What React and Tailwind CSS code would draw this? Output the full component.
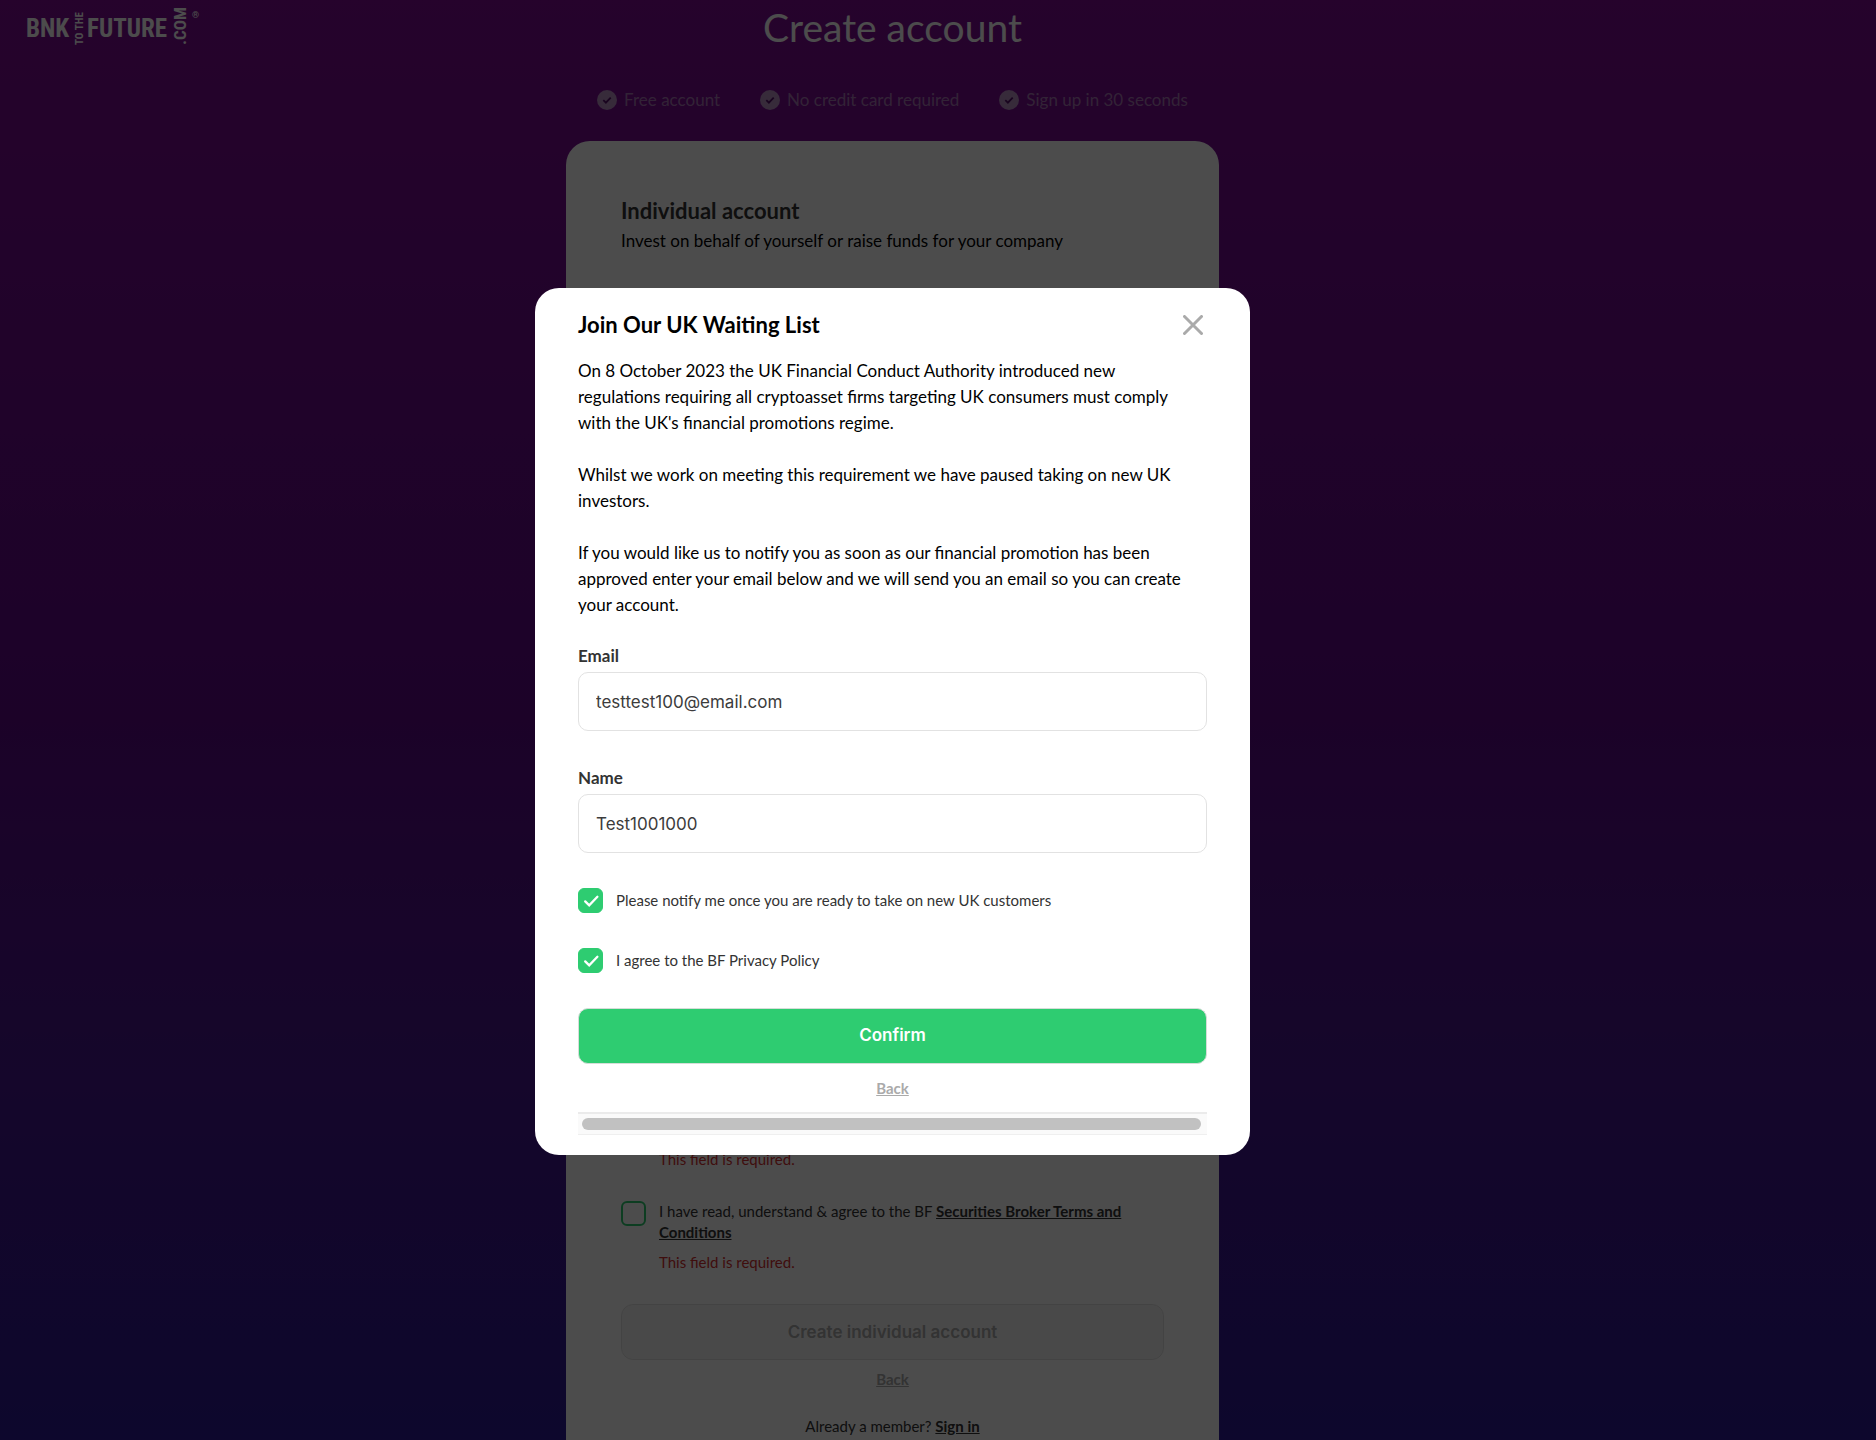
import { useState } from 'react';

const FEATURES = ['Free account', 'No credit card required', 'Sign up in 30 seconds'];

function Logo() {
  return (
    <svg width="190" height="44" viewBox="0 0 190 44" fill="white" role="img" aria-label="BnkToTheFuture.com"
      className="font-['Liberation_Sans_Narrow','Roboto_Condensed','Roboto',sans-serif] font-bold">
      <text x="0" y="31" fontSize="25">BNK</text>
      <text transform="translate(57 39) rotate(-90)" fontSize="11">TO THE</text>
      <text x="61" y="31" fontSize="25">FUTURE</text>
      <text transform="translate(160 39) rotate(-90)" fontSize="17">.COM</text>
      <text x="166" y="12" fontSize="9">®</text>
    </svg>
  );
}

function Feature({ label }) {
  return (
    <li className="flex items-center gap-[7px]">
      <svg width="20" height="20" viewBox="0 0 20 20" fill="none">
        <circle cx="10" cy="10" r="10" fill="#b88fc4" />
        <path d="M6.3 10.2l2.6 2.5 4.8-5" stroke="#560f68" strokeWidth="1.8" />
      </svg>
      <span>{label}</span>
    </li>
  );
}

function Field({ id, label, type, value, onChange }) {
  return (
    <div className="flex flex-col gap-1">
      <label htmlFor={id} className="text-[17px] leading-6 font-bold text-[#333]">{label}</label>
      <input id={id} type={type} value={value} onChange={(e) => onChange(e.target.value)}
        className="h-[59px] w-full rounded-[10px] border border-[#e2e2e2] bg-white px-[17px] pt-px font-['Inter',sans-serif] text-[17px] text-[#3c3c3c] outline-none" />
    </div>
  );
}

function Checkbox({ id, label }) {
  const [checked, setChecked] = useState(true);

  return (
    <div className="flex items-center gap-[13px]">
      <span className="grid shrink-0">
        <input id={id} type="checkbox" checked={checked} onChange={() => setChecked(!checked)}
          className="peer col-start-1 row-start-1 size-[25px] appearance-none rounded-md border border-[#2ecc71] checked:bg-[#2ecc71]" />
        <svg width="25" height="25" viewBox="0 0 25 25" fill="none"
          className="pointer-events-none invisible col-start-1 row-start-1 peer-checked:visible">
          <path d="M7.2 13.4l4 4 8.2-8.6" stroke="white" strokeWidth="2.3" strokeLinecap="round" />
        </svg>
      </span>
      <label htmlFor={id} className="text-[15px] leading-6 text-[#333]">{label}</label>
    </div>
  );
}

function WaitingListModal() {
  const [email, setEmail] = useState('testtest100@email.com');
  const [name, setName] = useState('Test1001000');

  return (
    <div className="fixed inset-0 flex items-center justify-center bg-black/70 pt-0.5 pr-[91px]">
      <div role="dialog" aria-labelledby="modal-title" className="w-full max-w-[715px] rounded-3xl bg-white px-[43px] pt-[22px] pb-5">
        <div className="flex h-[30px] items-center justify-between">
          <h2 id="modal-title" className="text-[22px] font-bold text-black">Join Our UK Waiting List</h2>
          <button aria-label="Close" className="mr-1">
            <svg width="20" height="20" viewBox="0 0 20 20" fill="none" stroke="#aaa" strokeWidth="3" strokeLinecap="round">
              <path d="M1.5 1.5l17 17M18.5 1.5l-17 17" />
            </svg>
          </button>
        </div>
        <div className="mt-[18px] flex flex-col gap-[26px] pr-5 text-[17px] leading-[26px] text-black">
          <p>
            On 8 October 2023 the UK Financial Conduct Authority introduced new regulations requiring all
            cryptoasset firms targeting UK consumers must comply with the UK's financial promotions regime.
          </p>
          <p>Whilst we work on meeting this requirement we have paused taking on new UK investors.</p>
          <p>
            If you would like us to notify you as soon as our financial promotion has been approved enter your
            email below and we will send you an email so you can create your account.
          </p>
        </div>
        <form className="mt-[26px] flex flex-col gap-[35px]" onSubmit={(e) => e.preventDefault()}>
          <Field id="email" label="Email" type="email" value={email} onChange={setEmail} />
          <Field id="name" label="Name" type="text" value={name} onChange={setName} />
          <Checkbox id="notify" label="Please notify me once you are ready to take on new UK customers" />
          <Checkbox id="privacy" label="I agree to the BF Privacy Policy" />
          <button type="submit" className="h-[56px] rounded-[10px] border border-[#d5ddd8] bg-[#2ecc71] pt-px font-['Inter',sans-serif] text-[17px] font-semibold text-white">
            Confirm
          </button>
        </form>
        <div className="mt-3 text-center text-[15px] leading-6 font-bold text-[#aaa]">
          <a href="#" className="underline">Back</a>
        </div>
        <div className="mt-3 border-t-2 border-b border-t-[#ebebeb] border-b-[#efefef] bg-[#fafafa] py-1 pr-[6px] pl-1">
          <div className="h-3 rounded-full bg-[#c1c1c1]" />
        </div>
      </div>
    </div>
  );
}

export default function App() {
  return (
    <div className="relative flex h-screen flex-col overflow-hidden bg-linear-to-b from-[#7f0a93] via-[#5e0888] to-[#2c1896] font-['Lato',sans-serif]">
      <header className="absolute top-[6px] left-[26px]">
        <Logo />
      </header>
      <main className="flex flex-1 flex-col items-center pr-[91px]">
        <h1 className="mt-[3px] text-[39px] leading-[48px] text-white">Create account</h1>
        <ul className="mt-[37px] flex gap-10 text-[17px] leading-6 text-[#a977b6]">
          {FEATURES.map((label) => <Feature key={label} label={label} />)}
        </ul>
        <section className="mt-[29px] flex w-full max-w-[653px] flex-1 flex-col justify-between rounded-t-3xl bg-white px-[55px]">
          <div className="pt-[55px]">
            <h2 className="text-[22px] leading-[30px] font-bold text-[#333]">Individual account</h2>
            <p className="text-[17px] leading-[30px] text-black">Invest on behalf of yourself or raise funds for your company</p>
          </div>
          <div className="flex flex-col pb-[3px] text-[15px] leading-[21px] text-[#333]">
            <p className="pl-[38px] text-[#d32f2f]">This field is required.</p>
            <div className="mt-[31px] flex items-start gap-[13px]">
              <input id="terms" type="checkbox" className="size-[25px] shrink-0 appearance-none rounded-md border-2 border-[#2ecc71]" />
              <label htmlFor="terms">
                I have read, understand &amp; agree to the BF{' '}
                <a href="#" className="font-bold underline">Securities Broker Terms and Conditions</a>
              </label>
            </div>
            <p className="mt-[9px] pl-[38px] text-[#d32f2f]">This field is required.</p>
            <button disabled className="mt-[31px] h-[56px] rounded-xl border border-[#e2e2e2] bg-[#f6f6f6] pt-px font-['Inter',sans-serif] text-[17px] font-semibold text-[#aaa]">
              Create individual account
            </button>
            <a href="#" className="mt-[9px] self-center font-bold text-[#aaa] underline">Back</a>
            <p className="mt-[26px] text-center">
              Already a member? <a href="#" className="font-bold underline">Sign in</a>
            </p>
          </div>
        </section>
      </main>
      <WaitingListModal />
    </div>
  );
}
